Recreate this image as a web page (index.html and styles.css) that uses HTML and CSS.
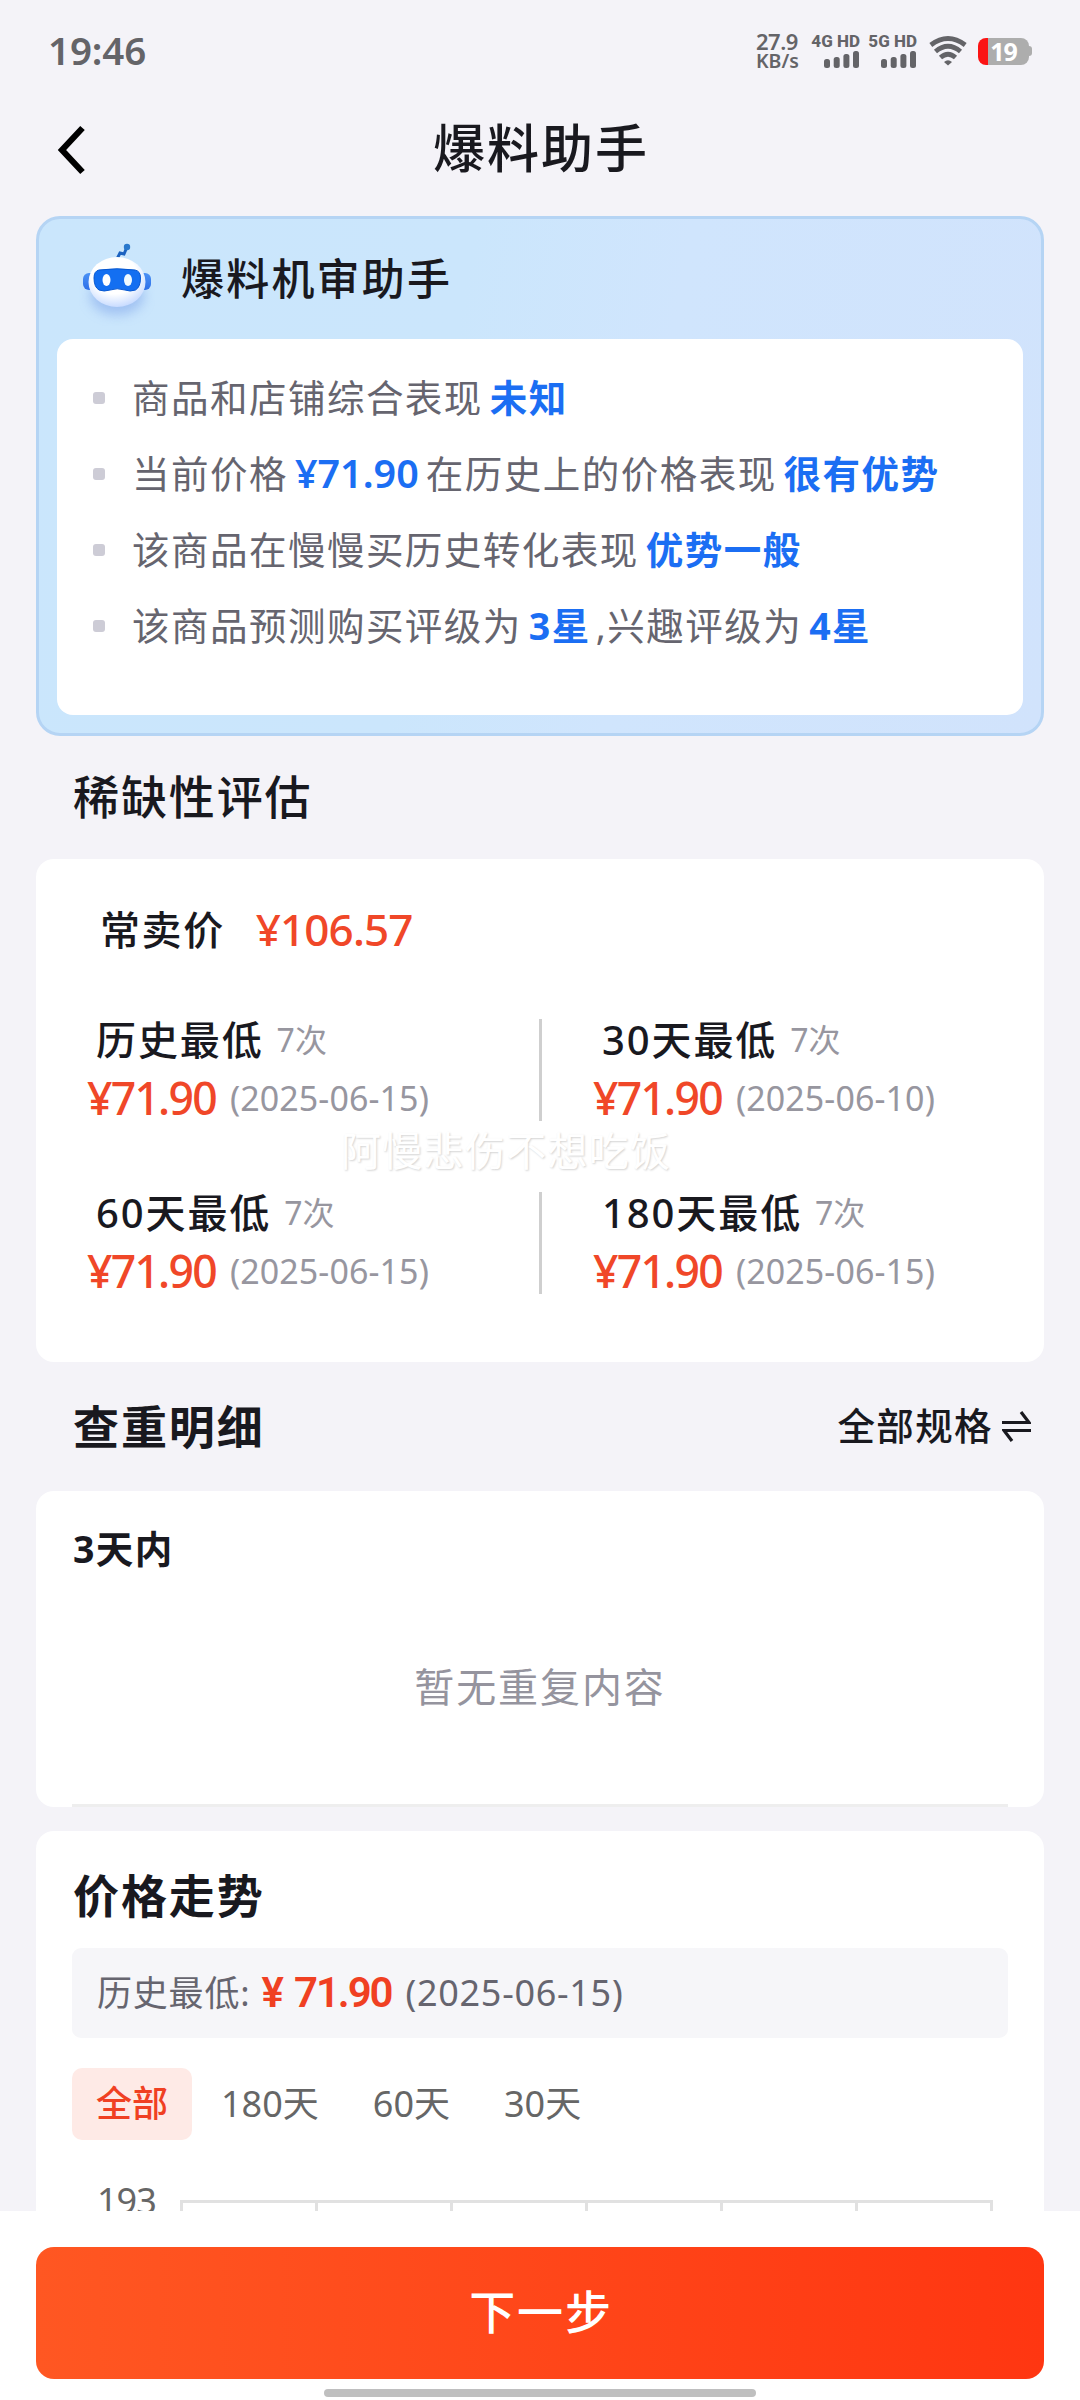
FILE: index.html
```html
<!DOCTYPE html>
<html lang="zh-CN">
<head>
<meta charset="utf-8">
<title>爆料助手</title>
<link rel="stylesheet" href="styles.css">
</head>
<body>
<div class="screen">
  <div class="content">
    <div class="status">
      <span class="time">19:46</span>
      <div class="speed"><span class="rate">27.9</span><span class="unit">KB/s</span></div>
      <div class="net">
        <span>4G HD</span>
        <svg width="36" height="17" viewBox="0 0 36 17"><rect x="0" y="8" width="6" height="9" rx="2.5"/><rect x="9.7" y="6" width="6" height="11" rx="2.5"/><rect x="19.4" y="3" width="6" height="14" rx="2.5"/><rect x="29" y="0" width="6" height="17" rx="2.5"/></svg>
      </div>
      <div class="net">
        <span>5G HD</span>
        <svg width="36" height="17" viewBox="0 0 36 17"><rect x="0" y="8" width="6" height="9" rx="2.5"/><rect x="9.7" y="6" width="6" height="11" rx="2.5"/><rect x="19.4" y="3" width="6" height="14" rx="2.5"/><rect x="29" y="0" width="6" height="17" rx="2.5"/></svg>
      </div>
      <svg class="wifi" width="38" height="30" viewBox="0 0 38 30" fill="none" stroke="#646468" stroke-width="4.800"><path d="M1.800 9Q19-4 36.200 9"/><path d="M6.500 15.500Q19 5 31.500 15.500"/><path d="M11.500 21.500Q19 15 26.500 21.500"/><path d="M15 26Q19 22.500 23 26L19 29.500Z" fill="#646468" stroke="none"/></svg>
      <div class="battery"><span class="cell">19</span><i class="nub"></i></div>
    </div>

    <div class="header">
      <svg class="back" width="30" height="50" viewBox="0 0 30 50"><path d="M25.500 3L5 25L25.500 47" fill="none" stroke="#000" stroke-width="6.200"/></svg>
      <h1>爆料助手</h1>
    </div>

    <section class="assistant">
      <div class="assistant-head">
        <svg class="robot" width="76" height="84" viewBox="0 0 76 84">
          <defs>
            <radialGradient id="face" cx=".45" cy=".35" r=".65"><stop offset=".6" stop-color="#fff"/><stop offset="1" stop-color="#c9dcff"/></radialGradient>
            <linearGradient id="ear" x1="0" x2="0" y1="0" y2="1"><stop offset="0" stop-color="#4b92f5"/><stop offset="1" stop-color="#2d6fe8"/></linearGradient>
            <filter id="soft" x="-30%" y="-30%" width="160%" height="160%"><feGaussianBlur stdDeviation="6"/></filter>
          </defs>
          <ellipse cx="38" cy="54" rx="27" ry="19" fill="#8fb2ee" opacity=".7" filter="url(#soft)"/>
          <path d="M38 17L41 11L45 12L48 5" fill="none" stroke="#1c62c0" stroke-width="3"/>
          <circle cx="48" cy="5" r="3.200" fill="#2878cc"/>
          <rect x="4" y="31" width="14" height="17" rx="6" fill="url(#ear)"/>
          <rect x="58" y="31" width="14" height="17" rx="6" fill="url(#ear)"/>
          <ellipse cx="38" cy="40" rx="28.500" ry="25" fill="url(#face)"/>
          <path d="M20 28Q38 25.500 56 28Q61.500 29 61.500 36Q61.500 45 56.500 48Q51 50 46 48Q38 45.500 31 48Q25 50 20 48Q15 45 15 36Q15 29 20 28Z" fill="#136ff1" stroke="#0758d0"/>
          <ellipse cx="27.500" cy="38" rx="4" ry="6" fill="#fff"/>
          <ellipse cx="49" cy="38" rx="4" ry="6" fill="#eefaff"/>
        </svg>
        <h2>爆料机审助手</h2>
      </div>
      <ul class="findings">
        <li><span>商品和店铺综合表现</span><b>未知</b></li>
        <li><span>当前价格</span><b class="num">¥71.90</b><span>在历史上的价格表现</span><b>很有优势</b></li>
        <li><span>该商品在慢慢买历史转化表现</span><b>优势一般</b></li>
        <li><span>该商品预测购买评级为</span><b>3星</b><span>,兴趣评级为</span><b>4星</b></li>
      </ul>
    </section>

    <h3 class="section-title scarcity-title">稀缺性评估</h3>
    <section class="card scarcity">
      <div class="usual"><span>常卖价</span><strong>¥106.57</strong></div>
      <div class="lows">
        <div class="low"><p class="label">历史最低<small>7次</small></p><p class="price">¥71.90<time>(2025-06-15)</time></p></div>
        <i class="divider"></i>
        <div class="low"><p class="label">30天最低<small>7次</small></p><p class="price">¥71.90<time>(2025-06-10)</time></p></div>
        <div class="low"><p class="label">60天最低<small>7次</small></p><p class="price">¥71.90<time>(2025-06-15)</time></p></div>
        <i class="divider"></i>
        <div class="low"><p class="label">180天最低<small>7次</small></p><p class="price">¥71.90<time>(2025-06-15)</time></p></div>
      </div>
      <span class="watermark">阿慢悲伤不想吃饭</span>
    </section>

    <div class="section-title duplicates-title">
      <h3>查重明细</h3>
      <div class="spec"><span>全部规格</span><svg width="29" height="34" viewBox="0 0 29 34" fill="none" stroke="#19191f" stroke-width="3.200"><path d="M0 12.500H27L19 2"/><path d="M29 20.500H2L10 31"/></svg></div>
    </div>
    <section class="card duplicates">
      <h4>3天内</h4>
      <p class="empty">暂无重复内容</p>
      <hr>
    </section>

    <section class="card trend">
      <h3>价格走势</h3>
      <div class="lowest"><span>历史最低:</span><strong>¥ 71.90</strong><time>(2025-06-15)</time></div>
      <div class="tabs"><span class="tab active">全部</span><span class="tab">180天</span><span class="tab">60天</span><span class="tab">30天</span></div>
      <svg class="chart" width="936" height="120" viewBox="0 0 936 120">
        <text x="25" y="74">193</text>
        <path d="M108 61.500H921M109.500 60V120M244.500 60V120M379.500 60V120M514.500 60V120M649.500 60V120M784.500 60V120M919.500 60V120" stroke="#e1e1e1" stroke-width="3" fill="none"/>
      </svg>
    </section>
  </div>

  <footer class="footer">
    <button class="next">下一步</button>
    <i class="home-bar"></i>
  </footer>
</div>
</body>
</html>
```
FILE: styles.css
```css
* { box-sizing: border-box; margin: 0; padding: 0; }

body {
  font-family: "Noto Sans", "Noto Sans CJK SC", sans-serif;
  line-height: 1.3;
  background: #f4f3f8;
  color: #19191f;
}

h1, h2, h3, h4 { font-weight: 500; }
i { display: block; }

.screen { display: flex; flex-direction: column; width: 1080px; height: 2400px; }
.content { height: 2211px; overflow: hidden; }

/* status bar */
.status { display: flex; align-items: center; height: 102px; padding: 0 48px; color: #646468; }
.time { flex: 1; padding-bottom: 1px; font-size: 38.500px; font-weight: 600; letter-spacing: -.1px; }
.speed { display: flex; flex-direction: column; width: 57px; font-weight: 600; }
.rate { font-size: 22px; line-height: 20px; letter-spacing: -.5px; }
.unit { font-size: 19.500px; line-height: 20px; }
.net { display: flex; flex-direction: column; align-items: flex-end; gap: 3px; width: 47px; margin-right: 10px; }
.net span { font-family: Roboto, sans-serif; font-size: 17px; font-weight: 800; line-height: 14px; white-space: nowrap; }
.net svg { fill: #646468; }
.wifi { margin: 0 11px 0 2px; }
.battery { display: flex; align-items: center; }
.cell { width: 51px; height: 27px; border-radius: 8px; background: linear-gradient(90deg, #fb1414 10px, #adadad 10px); color: #fff; font-size: 25px; font-weight: 700; line-height: 27px; letter-spacing: -1px; text-align: center; }
.nub { width: 3px; height: 10px; border-radius: 0 3px 3px 0; background: #adadad; }

/* page header */
.header { display: grid; grid-template-columns: 1fr auto 1fr; align-items: center; height: 96px; }
.back { margin-left: 57px; }
.header h1 { padding: 0 0 4px 2px; font-size: 52px; letter-spacing: 2px; line-height: 92px; }

/* review assistant */
.assistant { height: 520px; margin: 18px 36px 0; padding: 0 18px 18px; border: 3px solid #b5d4f4; border-radius: 24px; background: linear-gradient(100deg, #cae6fc 0%, #cbe6fc 40%, #d0e5fd 60%, #d1e3fc 100%); }
.assistant-head { display: flex; align-items: center; height: 120px; padding-left: 22px; }
.robot { margin-top: 10px; }
.assistant-head h2 { margin-left: 26px; font-size: 43px; letter-spacing: 2.200px; }
.findings { height: 376px; padding: 21px 36px 0; border-radius: 16px; background: #fff; list-style: none; }
.findings li { display: flex; align-items: center; height: 76px; color: #66656f; font-size: 37.500px; letter-spacing: 1.480px; white-space: nowrap; }
.findings li::before { content: ""; width: 12px; height: 12px; margin-right: 27px; border-radius: 3px; background: #cdccd6; }
.findings b { margin: 0 5px 0 7px; color: #1b6ef3; font-weight: 700; }
.findings .num { margin-right: 7px; font-size: 39.500px; font-weight: 600; letter-spacing: 0; }

/* sections */
.section-title { padding: 0 13px 0 73px; font-size: 46px; letter-spacing: 1.900px; }
.scarcity-title { height: 123px; line-height: 121px; }
.card { margin: 0 36px; border-radius: 18px; background: #fff; }

.scarcity { position: relative; height: 503px; }
.usual { display: flex; align-items: center; height: 142px; padding-left: 64px; font-size: 40px; font-weight: 500; letter-spacing: 1.600px; }
.usual strong { margin-left: 31px; color: #f04728; font-size: 44px; font-weight: 500; letter-spacing: -.9px; }
.lows { display: grid; grid-template-columns: 503px 3px 1fr; grid-auto-rows: 173px; margin-top: 9px; }
.low { padding-left: 51px; white-space: nowrap; }
.divider { height: 102px; margin-top: 9px; background: #cfcfcf; }
.label { display: flex; align-items: center; height: 59px; padding-left: 9px; font-size: 40px; font-weight: 500; letter-spacing: 1.900px; }
.label small { margin-left: 13px; color: #97969f; font-size: 32px; font-weight: 400; letter-spacing: 0; }
.price { display: flex; align-items: center; height: 58px; color: #f04728; font-size: 44.500px; font-weight: 500; letter-spacing: -1.750px; }
.price time { margin-left: 14px; color: #97969f; font-size: 34px; font-weight: 400; letter-spacing: .1px; }
.watermark { position: absolute; left: 305px; top: 262px; color: #fff; font-size: 40px; line-height: 60px; letter-spacing: 1.300px; text-shadow: 1px 1px 2px #d4d4d4; }

.duplicates-title { display: flex; align-items: center; justify-content: space-between; height: 129px; }
.duplicates-title h3 { font-size: 46px; font-weight: 700; }
.spec { display: flex; align-items: center; gap: 9px; margin-right: 36px; font-size: 37.500px; font-weight: 500; letter-spacing: 1.400px; }
.duplicates { height: 316px; padding: 30px 36px 0; }
.duplicates h4 { padding-left: 1px; font-size: 37.500px; font-weight: 700; line-height: 56px; letter-spacing: 1.400px; }
.empty { height: 227px; color: #95949e; font-size: 40px; line-height: 220px; letter-spacing: 1.900px; text-align: center; }
.duplicates hr { height: 3px; border: 0; background: #eee; }

/* price trend */
.trend { height: 600px; margin-top: 24px; padding: 11px 36px 0; }
.trend h3 { padding-left: 1px; font-size: 46px; font-weight: 700; line-height: 106px; letter-spacing: 1.900px; }
.lowest { display: flex; align-items: center; height: 90px; padding-left: 25px; border-radius: 9px; background: #f6f6f9; color: #66656f; font-size: 35px; letter-spacing: .8px; }
.lowest strong { margin: 0 14px 0 11px; color: #f04022; font-family: Roboto, sans-serif; font-size: 42px; font-weight: 600; letter-spacing: -2.100px; word-spacing: 4px; }
.lowest time { font-size: 36px; letter-spacing: .7px; }
.tabs { display: flex; height: 72px; margin-top: 30px; }
.tab { padding: 0 27px; border-radius: 10px; color: #666; font-size: 36px; line-height: 72px; }
.tab.active { margin-right: 2px; padding: 0 24px; background: #feeae6; color: #f04022; font-weight: 500; }
.chart { display: block; }
.chart text { fill: #666; font-size: 36px; letter-spacing: -1px; }

/* bottom action */
.footer { display: flex; flex-direction: column; align-items: center; height: 189px; padding-top: 36px; background: #fff; }
.next { width: 1008px; height: 132px; padding: 0 0 2px 2px; border: 0; border-radius: 18px; background: linear-gradient(90deg, #ff5722, #ff3611); color: #fff; font-family: inherit; font-size: 46px; font-weight: 500; line-height: 1.3; letter-spacing: 1.800px; }
.home-bar { width: 432px; height: 8px; margin-top: 10px; border-radius: 4px; background: #bfbfbf; }
```
